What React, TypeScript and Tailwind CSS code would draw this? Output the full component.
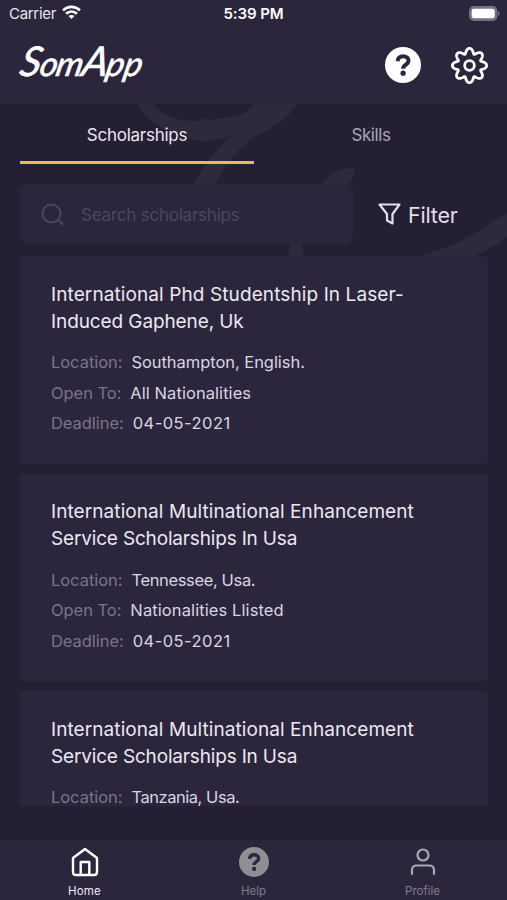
import React from 'react';

interface Line {
  text: string;
  tracking: string;
}

interface Scholarship {
  title: Line[];
  details: { label: string; value: Line }[];
}

const multinationalTitle: Line[] = [
  { text: 'International Multinational Enhancement', tracking: 'tracking-[0.08px]' },
  { text: 'Service Scholarships In Usa', tracking: 'tracking-[-0.17px]' },
];

const scholarships: Scholarship[] = [
  {
    title: [
      { text: 'International Phd Studentship In Laser-', tracking: 'tracking-[0.1px]' },
      { text: 'Induced Gaphene, Uk', tracking: 'tracking-[-0.1px]' },
    ],
    details: [
      { label: 'Location:', value: { text: 'Southampton, English.', tracking: 'tracking-[-0.05px]' } },
      { label: 'Open To:', value: { text: 'All Nationalities', tracking: 'tracking-[0.06px]' } },
      { label: 'Deadline:', value: { text: '04-05-2021', tracking: 'tracking-[0.45px]' } },
    ],
  },
  {
    title: multinationalTitle,
    details: [
      { label: 'Location:', value: { text: 'Tennessee, Usa.', tracking: 'tracking-[-0.36px]' } },
      { label: 'Open To:', value: { text: 'Nationalities Llisted', tracking: 'tracking-[0.1px]' } },
      { label: 'Deadline:', value: { text: '04-05-2021', tracking: 'tracking-[0.45px]' } },
    ],
  },
  {
    title: multinationalTitle,
    details: [
      { label: 'Location:', value: { text: 'Tanzania, Usa.', tracking: 'tracking-[-0.46px]' } },
    ],
  },
];

// closed outline of the eight-lobed gear, lobes a bit wider than the notches
function gearPath() {
  const points: string[] = [];
  for (let i = 0; i < 240; i++) {
    const t = (i / 240) * Math.PI * 2;
    const a = t + 0.035 * Math.sin(8 * t);
    const r = 14.2 + 2.5 * Math.cos(8 * t);
    points.push(`${(18 + r * Math.sin(a)).toFixed(2)} ${(18 - r * Math.cos(a)).toFixed(2)}`);
  }
  return `M${points.join('L')}Z`;
}

function GearIcon() {
  return (
    <svg width="37" height="37" viewBox="0 0 36 36" fill="none" stroke="white" strokeWidth="2.7" strokeLinejoin="round">
      <path d={gearPath()} />
      <circle cx="18" cy="18" r="4.7" />
    </svg>
  );
}

function QuestionIcon({ size, color }: { size: number; color: string }) {
  return (
    <svg width={size} height={size} viewBox="0 0 36 36" fill="none">
      <circle cx="18" cy="18" r="18" fill={color} />
      <path d="M12.6 14.2C13 10.8 15.2 9.3 18.2 9.3C21.3 9.3 23.6 11 23.6 13.8C23.6 17.6 18.1 17.7 18.1 21.7" stroke="#2c263d" strokeWidth="4" />
      <circle cx="18.1" cy="26.2" r="2.6" fill="#2c263d" />
    </svg>
  );
}

function StatusBar() {
  return (
    <div className="grid h-7 grid-cols-3 items-center px-[9px] text-[15px] text-[#e9e7ee]">
      <div className="flex items-center gap-1.5">
        <span className="tracking-[-0.3px]">Carrier</span>
        <svg className="-mt-[3px]" width="19" height="15" viewBox="0 0 19 15" fill="none" stroke="white" strokeWidth="2.6">
          <path d="M1 5.4C6 .7 13 .7 18 5.4" />
          <path d="M4.1 8.7C7.2 5.8 11.8 5.8 14.9 8.7" />
          <path d="M9.5 14L6.5 11C8.2 9.5 10.8 9.5 12.5 11Z" fill="white" stroke="none" />
        </svg>
      </div>
      <span className="text-center font-semibold tracking-[-0.1px] text-white">5:39 PM</span>
      <svg className="-mt-0.5 -mr-0.5 justify-self-end" width="31" height="15" viewBox="0 0 31 15">
        <rect x=".7" y=".7" width="27" height="13.6" rx="4" fill="#777184" stroke="#777184" strokeWidth="1.3" />
        <rect x="2.7" y="2.7" width="23" height="9.6" rx="2.2" fill="white" />
        <path d="M29 5c2 .8 2 4.2 0 5Z" fill="#777184" />
      </svg>
    </div>
  );
}

function Logo() {
  return (
    <div className="mb-1.5 -ml-1 flex origin-bottom-left -skew-x-12 items-baseline font-['Lato'] leading-[48px] text-white italic [-webkit-text-stroke:0.6px_white]">
      <span className="text-[41px] tracking-[-1px]">S</span>
      <span className="text-[34px] tracking-[-1.2px]">om</span>
      <span className="text-[41px] tracking-[-1.5px]">A</span>
      <span className="text-[34px]">pp</span>
    </div>
  );
}

function Header() {
  return (
    <header className="h-[104px] shrink-0 bg-[#2c263d]">
      <StatusBar />
      <div className="flex h-[74px] items-center justify-between pr-[19px] pl-5">
        <Logo />
        <div className="flex items-center gap-[30px]">
          <QuestionIcon size={36} color="#ffffff" />
          <GearIcon />
        </div>
      </div>
    </header>
  );
}

function Watermark() {
  return (
    <svg className="absolute top-0 left-0" width="507" height="152" viewBox="0 104 507 152" fill="#2e293b">
      <path d="M139 104H154C166 125 210 123 232 118C242 115 249 110 254 104H297C288 119 274 127 254 137C236 150 222 167 213 190H192C200 170 214 151 231 136C211 142 193 141 184 134C157 130 143 118 139 104Z" />
      <path d="M200 119C226 121 245 115 262 104H297C288 119 274 127 254 137L231 136C215 142 199 143 186 137Z" />
      <path d="M322 184C329 174 341 168 350 168C356 169 356 177 348 185V192H318Z" />
      <path d="M291 244H301L304 256H288Z" />
      <path d="M419 256C454 248 479 231 507 213V237C496 245 486 250 475 256Z" />
    </svg>
  );
}

function Row({ label, value }: { label: string; value: Line }) {
  return (
    <div className="flex h-[30.5px] items-center gap-[9px] text-[16.5px] leading-4">
      <span className="tracking-[-0.05px] text-[#79748a]">{label}</span>
      <span className={`text-[#d9d5e1] ${value.tracking}`}>{value.text}</span>
    </div>
  );
}

function Card({ item }: { item: Scholarship }) {
  return (
    <article className="h-[207.5px] shrink-0 rounded-[3px] bg-[#2c263d] pt-[24.9px] pl-[31px]">
      <h2 className="mb-3 text-[19px] leading-[27px] whitespace-nowrap text-[#ebe8f1]">
        {item.title.map((line) => (
          <span key={line.text} className={`block ${line.tracking}`}>{line.text}</span>
        ))}
      </h2>
      {item.details.map((row) => (
        <Row key={row.label} label={row.label} value={row.value} />
      ))}
    </article>
  );
}

export default function App() {
  return (
    <div className="flex h-[900px] w-[507px] flex-col overflow-hidden bg-[#251f34] font-['Inter',sans-serif]">
      <Header />
      <main className="relative h-[736px] shrink-0">
        <Watermark />
        <div className="relative px-5 pr-[19px]">
          <nav className="grid h-[60px] grid-cols-2 items-start text-center text-[17px] leading-[62px]">
            <span className="h-[60px] border-b-3 border-[#edb56a] tracking-[-0.25px] text-[#e9e6f0]">Scholarships</span>
            <span className="h-[60px] tracking-[-0.4px] text-[#aaa5b5]">Skills</span>
          </nav>
          <div className="mt-5 flex h-[60px] items-center">
            <div className="flex h-full w-[333px] items-center gap-[17px] rounded-lg bg-[#2c263d] pl-[21px] text-[17px] text-[#4d475b]">
              <svg width="23" height="23" viewBox="0 0 23 23" fill="none" stroke="currentColor" strokeWidth="2">
                <circle cx="10.5" cy="10.5" r="9" />
                <path d="M17 17L21.5 21" strokeLinecap="round" />
              </svg>
              <span className="pt-[3px] tracking-[-0.22px]">Search scholarships</span>
            </div>
            <div className="flex items-center gap-[7px] pl-[25px] text-[21.5px] text-[#e2dfe8]">
              <svg width="23" height="22" viewBox="0 0 23 22" fill="none" stroke="currentColor" strokeWidth="2.2" strokeLinejoin="round">
                <path d="M1.5 1.5H21.5L14.5 11V20.5L9 17.5V11Z" />
              </svg>
              <span className="pt-0.5 tracking-[-0.2px]">Filter</span>
            </div>
          </div>
          <section className="mt-3 flex h-[550px] flex-col gap-2.5 overflow-hidden">
            {scholarships.map((item, i) => (
              <Card key={i} item={item} />
            ))}
          </section>
        </div>
      </main>
      <footer className="grid h-[60px] shrink-0 grid-cols-3 bg-[#2c263d] text-[11.5px] text-[#817c8c]">
        <div className="flex flex-col items-center text-[#eeeaf2]">
          <svg className="mt-[7px]" width="28" height="30" viewBox="0 0 28 30" fill="none" stroke="white" strokeWidth="2.4" strokeLinejoin="round">
            <path d="M14 2L26 11V25C26 27 25 28 23 28H5C3 28 2 27 2 25V11Z" />
            <path d="M9.7 28V15H18.3V28" />
          </svg>
          <span className="mt-1.5 leading-4 tracking-[0.2px]">Home</span>
        </div>
        <div className="flex flex-col items-center pt-[7px]">
          <QuestionIcon size={30} color="#918d94" />
          <span className="mt-1.5 leading-4">Help</span>
        </div>
        <div className="flex flex-col items-center pt-2">
          <svg width="26" height="28" viewBox="0 0 26 28" fill="none" stroke="#aaa5b2" strokeWidth="2.2" strokeLinecap="round">
            <circle cx="13" cy="7" r="5.5" />
            <path d="M2 26V22C2 19 4 17.5 7 17.5H19C22 17.5 24 19 24 22V26" />
          </svg>
          <span className="mt-[7px] leading-4">Profile</span>
        </div>
      </footer>
    </div>
  );
}
